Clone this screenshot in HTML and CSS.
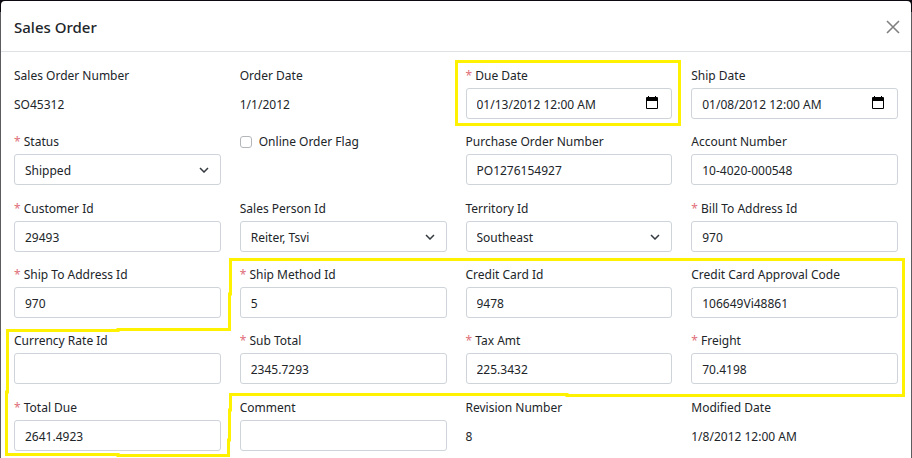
FILE: index.html
```html
<!DOCTYPE html>
<html lang="en">
<head>
<meta charset="utf-8">
<title>Sales Order</title>
<link rel="stylesheet" href="styles.css">
</head>
<body>
<main class="modal">
  <header class="modal-header">
    <h1 class="modal-title">Sales Order</h1>
    <button class="close" type="button" aria-label="Close"><svg width="14" height="14" viewBox="0 0 14 14"><path d="M1 1 13 13M13 1 1 13"/></svg></button>
  </header>
  <form class="form">
    <div class="field"><span class="label">Sales Order Number</span><span class="value">SO45312</span></div>
    <div class="field"><span class="label">Order Date</span><span class="value">1/1/2012</span></div>
    <div class="field"><label class="label required" for="due">Due Date</label><div class="wrap"><input class="control" id="due" type="text" value="01/13/2012 12:00 AM"><button class="picker" type="button" aria-label="Pick due date"><svg width="12" height="14" viewBox="0 0 12 14"><path d="M0 2Q0 1 1 1H2V0H3V1H9V0H10V1H11Q12 1 12 2V12Q12 13 11 13H1Q0 13 0 12ZM1 5V12H11V5Z" fill-rule="evenodd"/></svg></button></div></div>
    <div class="field"><label class="label" for="ship">Ship Date</label><div class="wrap"><input class="control" id="ship" type="text" value="01/08/2012 12:00 AM"><button class="picker" type="button" aria-label="Pick ship date"><svg width="12" height="14" viewBox="0 0 12 14"><path d="M0 2Q0 1 1 1H2V0H3V1H9V0H10V1H11Q12 1 12 2V12Q12 13 11 13H1Q0 13 0 12ZM1 5V12H11V5Z" fill-rule="evenodd"/></svg></button></div></div>

    <div class="field"><label class="label required" for="status">Status</label><div class="wrap"><select class="control" id="status"><option>Shipped</option></select><svg class="chevron" width="10" height="6" viewBox="0 0 10 6"><path d="M1 1 5 5 9 1"/></svg></div></div>
    <div class="field"><label class="label check"><input class="checkbox" type="checkbox">Online Order Flag</label></div>
    <div class="field"><label class="label" for="po">Purchase Order Number</label><input class="control" id="po" type="text" value="PO1276154927"></div>
    <div class="field"><label class="label" for="account">Account Number</label><input class="control" id="account" type="text" value="10-4020-000548"></div>

    <div class="field"><label class="label required" for="customer">Customer Id</label><input class="control" id="customer" type="text" value="29493"></div>
    <div class="field"><label class="label" for="person">Sales Person Id</label><div class="wrap"><select class="control" id="person"><option>Reiter, Tsvi</option></select><svg class="chevron" width="10" height="6" viewBox="0 0 10 6"><path d="M1 1 5 5 9 1"/></svg></div></div>
    <div class="field"><label class="label" for="territory">Territory Id</label><div class="wrap"><select class="control" id="territory"><option>Southeast</option></select><svg class="chevron" width="10" height="6" viewBox="0 0 10 6"><path d="M1 1 5 5 9 1"/></svg></div></div>
    <div class="field"><label class="label required" for="billto">Bill To Address Id</label><input class="control" id="billto" type="text" value="970"></div>

    <div class="field"><label class="label required" for="shipto">Ship To Address Id</label><input class="control" id="shipto" type="text" value="970"></div>
    <div class="field"><label class="label required" for="method">Ship Method Id</label><input class="control" id="method" type="text" value="5"></div>
    <div class="field"><label class="label" for="card">Credit Card Id</label><input class="control" id="card" type="text" value="9478"></div>
    <div class="field"><label class="label" for="approval">Credit Card Approval Code</label><input class="control" id="approval" type="text" value="106649Vi48861"></div>

    <div class="field"><label class="label" for="rate">Currency Rate Id</label><input class="control" id="rate" type="text"></div>
    <div class="field"><label class="label required" for="sub">Sub Total</label><input class="control" id="sub" type="text" value="2345.7293"></div>
    <div class="field"><label class="label required" for="tax">Tax Amt</label><input class="control" id="tax" type="text" value="225.3432"></div>
    <div class="field"><label class="label required" for="freight">Freight</label><input class="control" id="freight" type="text" value="70.4198"></div>

    <div class="field"><label class="label required" for="total">Total Due</label><input class="control" id="total" type="text" value="2641.4923"></div>
    <div class="field"><label class="label" for="comment">Comment</label><input class="control" id="comment" type="text"></div>
    <div class="field"><span class="label">Revision Number</span><span class="value">8</span></div>
    <div class="field"><span class="label">Modified Date</span><span class="value">1/8/2012 12:00 AM</span></div>
  </form>
</main>
<svg class="marks" viewBox="0 0 912 458" preserveAspectRatio="none" aria-hidden="true">
  <path d="M456.5 61.5H679.5V124.5H456.5Z"/>
  <path d="M230.500 259.500H903.500V395.500H567V394.500H230.500V410H229.500V440H228.500V455.500H118V454.500H6.500V392H7.500V330.500H118V329.500H229.500V294H230.500Z"/>
</svg>
</body>
</html>
```
FILE: styles.css
```css
* { box-sizing: border-box; }

body {
  margin: 0;
  min-height: 100vh;
  padding: 1px 1px 0;
  display: flex;
  background: linear-gradient(#0c0a10 12px, #5c5c60 12px);
  color: #212529;
  font-family: "Segoe UI", "Noto Sans", sans-serif;
  font-size: 12px;
}

.modal {
  flex: 1;
  display: flex;
  flex-direction: column;
  background: #fff;
  border-radius: 4px 4px 0 0;
}

.modal-header {
  height: 51px;
  padding: 1px 11px 0 13px;
  display: flex;
  align-items: center;
  justify-content: space-between;
  border-bottom: 1px solid #dee2e6;
}

.modal-title {
  margin: 0;
  font-size: 15px;
  line-height: 20px;
  font-weight: 500;
}

button {
  display: flex;
  padding: 0;
  border: 0;
  background: none;
}

.close path { fill: none; stroke: #808080; stroke-width: 1.6; }

.form {
  flex: 1;
  display: grid;
  grid-template-columns: repeat(4, minmax(0, 1fr));
  grid-auto-rows: 1fr;
  column-gap: 19px;
  padding: 8px 13px 0;
}

.field {
  display: flex;
  flex-direction: column;
  gap: 3px;
  padding-top: 7px;
}

.label { line-height: 18px; }

.required::before {
  content: "* ";
  color: #e0707a;
}

.value { line-height: 34px; }

.wrap { position: relative; }

.control {
  display: block;
  width: 100%;
  height: 31px;
  margin: 0;
  padding: 2px 10px 0;
  border: 1px solid #ced4da;
  border-radius: 3px;
  background: #fff;
  color: inherit;
  font: inherit;
  appearance: none;
}

.chevron {
  position: absolute;
  top: 13px;
  right: 12px;
  fill: none;
  stroke: #343a40;
  stroke-width: 1.5;
  pointer-events: none;
}

.picker {
  position: absolute;
  top: 8px;
  right: 14px;
}

.check {
  display: flex;
  align-items: center;
  gap: 7px;
}

.checkbox {
  width: 12px;
  height: 12px;
  margin: 0;
  border: 1px solid #b4b7ba;
  border-radius: 3px;
  appearance: none;
}

.marks {
  position: absolute;
  top: 0;
  left: 0;
  width: 100%;
  height: 100%;
  fill: none;
  stroke: #fff200;
  stroke-width: 3;
  pointer-events: none;
}
```
